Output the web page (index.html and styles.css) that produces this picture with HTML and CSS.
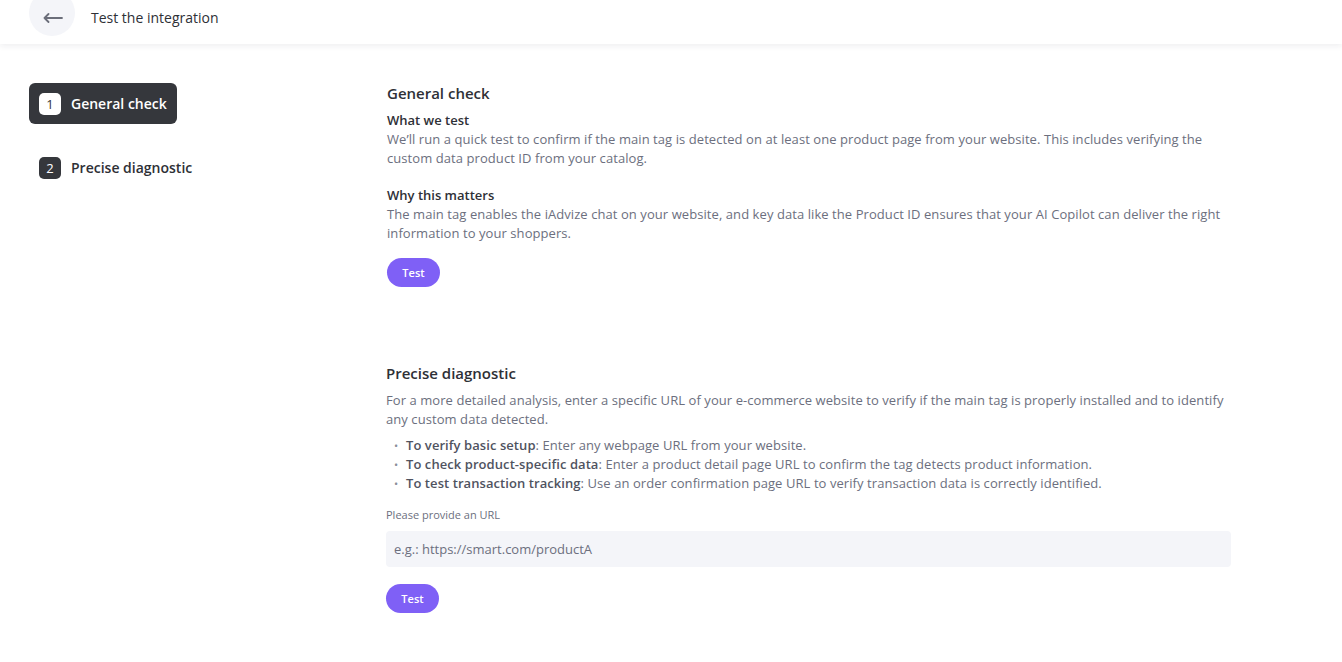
FILE: index.html
```html
<!DOCTYPE html>
<html lang="en">
<head>
<meta charset="utf-8">
<title>Test the integration</title>
<link rel="stylesheet" href="styles.css">
</head>
<body>
<header class="topbar">
  <button class="back" aria-label="Back">
    <svg width="20" height="10" viewBox="0 0 20 10" fill="none" stroke="#6b6e7a" stroke-width="1.8" stroke-linecap="round" stroke-linejoin="round"><path d="M19 5H1.5M5.5 1L1.5 5l4 4"/></svg>
  </button>
  <h1 class="title">Test the integration</h1>
</header>
<div class="layout">
  <nav class="steps">
    <div class="step active"><span class="num">1</span><span class="label">General check</span></div>
    <div class="step"><span class="num">2</span><span class="label">Precise diagnostic</span></div>
  </nav>
  <main class="content">
    <section class="block first">
      <h2 class="h">General check</h2>
      <h3 class="sub">What we test</h3>
      <p class="text">We’ll run a quick test to confirm if the main tag is detected on at least one product page from your website. This includes verifying the custom data product ID from your catalog.</p>
      <h3 class="sub gap">Why this matters</h3>
      <p class="text">The main tag enables the iAdvize chat on your website, and key data like the Product ID ensures that your AI Copilot can deliver the right information to your shoppers.</p>
      <button class="btn">Test</button>
    </section>
    <section class="block second">
      <h2 class="h">Precise diagnostic</h2>
      <p class="text intro">For a more detailed analysis, enter a specific URL of your e-commerce website to verify if the main tag is properly installed and to identify any custom data detected.</p>
      <ul class="list">
        <li><strong>To verify basic setup</strong>: Enter any webpage URL from your website.</li>
        <li><strong>To check product-specific data</strong>: Enter a product detail page URL to confirm the tag detects product information.</li>
        <li><strong>To test transaction tracking</strong>: Use an order confirmation page URL to verify transaction data is correctly identified.</li>
      </ul>
      <label class="fieldlabel" for="url">Please provide an URL</label>
      <input id="url" class="input" type="text" placeholder="e.g.: https://smart.com/productA">
      <button class="btn btn2">Test</button>
    </section>
  </main>
</div>
</body>
</html>
```
FILE: styles.css
```css
* { box-sizing: border-box; }
html, body { margin: 0; padding: 0; background: #fff; }
body {
  font-family: "Open Sans", "Liberation Sans", sans-serif;
  color: #2e3036;
  width: 1342px;
  height: 662px;
  overflow: hidden;
}
.topbar {
  height: 44px;
  display: flex;
  align-items: flex-start;
  padding-left: 29px;
  box-shadow: 0 2px 6px rgba(40, 44, 70, 0.08);
  position: relative;
}
.back {
  width: 46px;
  height: 46px;
  margin-top: -10px;
  border-radius: 50%;
  border: 0;
  background: #f4f5f9;
  display: flex;
  align-items: flex-end;
  justify-content: center;
  padding: 0 0 13px 1px;
}
.back svg { display: block; }
.title {
  margin: 0 0 0 16px;
  font-size: 14px;
  font-weight: 500;
  line-height: 20px;
  padding-top: 8px;
  color: #2e3036;
}
.layout {
  display: flex;
  padding: 39px 0 0 29px;
}
.steps {
  width: 357px;
  flex: none;
  display: flex;
  flex-direction: column;
  gap: 23px;
}
.step {
  display: flex;
  align-items: center;
  height: 41px;
  padding: 0 10px;
  gap: 10px;
  align-self: flex-start;
  border-radius: 6px;
  font-size: 14px;
  font-weight: 600;
  color: #2e3036;
}
.step .num {
  width: 22px;
  height: 22px;
  border-radius: 5px;
  background: #35373c;
  color: #fff;
  font-size: 13px;
  font-weight: 500;
  display: flex;
  align-items: center;
  justify-content: center;
}
.step.active {
  background: #35373c;
  color: #fff;
  width: 148px;
}
.step.active .num { background: #fff; color: #35373c; }
.content {
  width: 846px;
  display: flex;
  flex-direction: column;
}
.block { display: flex; flex-direction: column; align-items: flex-start; }
.block.first { padding-left: 1px; }
.h {
  margin: 0;
  font-size: 15px;
  font-weight: 600;
  line-height: 20px;
  color: #2e3036;
}
.sub {
  margin: 8px 0 0;
  font-size: 13px;
  font-weight: 600;
  line-height: 19px;
  color: #2e3036;
}
.sub.gap { margin-top: 18px; }
.text {
  margin: 0;
  font-size: 13px;
  line-height: 19px;
  letter-spacing: 0.07px;
  color: #6c6f7e;
}
.btn {
  margin-top: 15px;
  height: 29px;
  width: 53px;
  border: 0;
  border-radius: 15px;
  background: #7f60f6;
  color: #fff;
  font-family: inherit;
  font-size: 11px;
  font-weight: 600;
  padding: 0;
}
.second { margin-top: 76px; width: 100%; }
.intro { margin-top: 8px; }
.list {
  margin: 7px 0 0;
  padding: 0 0 0 20px;
  list-style: none;
  font-size: 13px;
  line-height: 19px;
  letter-spacing: 0.07px;
  color: #6c6f7e;
}
.list li { height: 19px; }
.list li::before {
  content: "•";
  display: inline-block;
  width: 12px;
  margin-left: -12px;
  font-size: 11px;
  line-height: 0;
  color: #8a8d99;
}
.list strong { font-weight: 600; color: #50535f; }
.fieldlabel {
  margin-top: 14px;
  font-size: 11px;
  line-height: 16px;
  color: #6c6f7e;
}
.input {
  margin-top: 8px;
  width: 845px;
  height: 36px;
  border: 0;
  border-radius: 4px;
  background: #f4f5f9;
  padding: 0 8px;
  font-family: inherit;
  font-size: 13px;
  color: #2e3036;
}
.input::placeholder { color: #6c6f7e; }
.btn2 { margin-top: 17px; }
```
